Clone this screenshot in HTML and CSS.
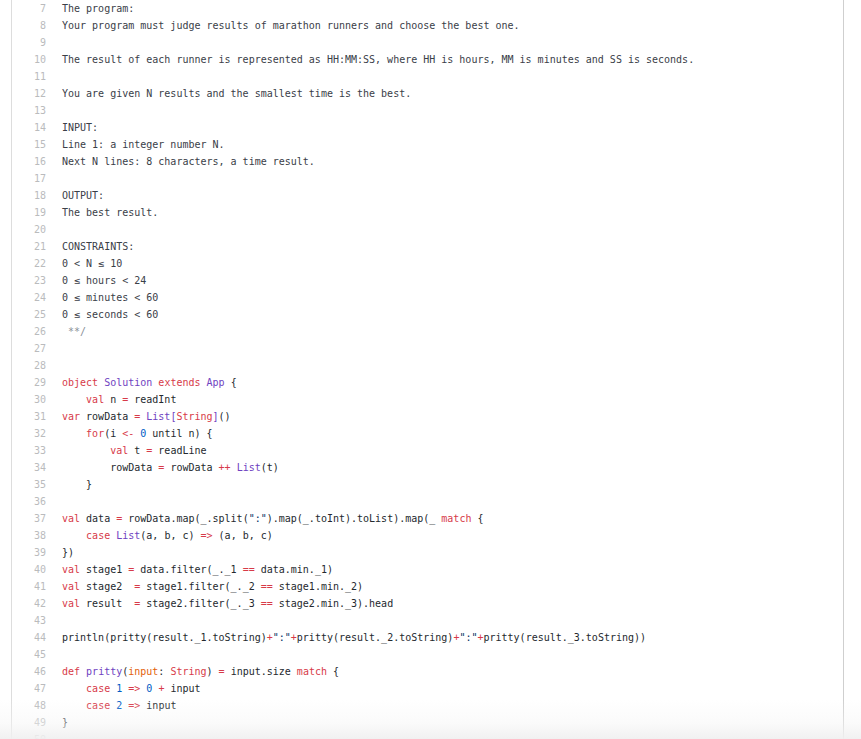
FILE: index.html
```html
<!DOCTYPE html>
<html>
<head>
<meta charset="utf-8">
<link rel="stylesheet" href="styles.css">
</head>
<body>
<div class="blob">
<table class="code">
<tr><td class="num">7</td><td class="line c">The program:</td></tr>
<tr><td class="num">8</td><td class="line c">Your program must judge results of marathon runners and choose the best one.</td></tr>
<tr><td class="num">9</td><td class="line c"></td></tr>
<tr><td class="num">10</td><td class="line c">The result of each runner is represented as HH:MM:SS, where HH is hours, MM is minutes and SS is seconds.</td></tr>
<tr><td class="num">11</td><td class="line c"></td></tr>
<tr><td class="num">12</td><td class="line c">You are given N results and the smallest time is the best.</td></tr>
<tr><td class="num">13</td><td class="line c"></td></tr>
<tr><td class="num">14</td><td class="line c">INPUT:</td></tr>
<tr><td class="num">15</td><td class="line c">Line 1: a integer number N.</td></tr>
<tr><td class="num">16</td><td class="line c">Next N lines: 8 characters, a time result.</td></tr>
<tr><td class="num">17</td><td class="line c"></td></tr>
<tr><td class="num">18</td><td class="line c">OUTPUT:</td></tr>
<tr><td class="num">19</td><td class="line c">The best result.</td></tr>
<tr><td class="num">20</td><td class="line c"></td></tr>
<tr><td class="num">21</td><td class="line c">CONSTRAINTS:</td></tr>
<tr><td class="num">22</td><td class="line c">0 &lt; N ≤ 10</td></tr>
<tr><td class="num">23</td><td class="line c">0 ≤ hours &lt; 24</td></tr>
<tr><td class="num">24</td><td class="line c">0 ≤ minutes &lt; 60</td></tr>
<tr><td class="num">25</td><td class="line c">0 ≤ seconds &lt; 60</td></tr>
<tr><td class="num">26</td><td class="line c"> <span class="end">**/</span></td></tr>
<tr><td class="num">27</td><td class="line"></td></tr>
<tr><td class="num">28</td><td class="line"></td></tr>
<tr><td class="num">29</td><td class="line"><span class="k">object</span> <span class="t">Solution</span> <span class="k">extends</span> <span class="t">App</span> {</td></tr>
<tr><td class="num">30</td><td class="line">    <span class="k">val</span> n <span class="k">=</span> readInt</td></tr>
<tr><td class="num">31</td><td class="line"><span class="k">var</span> rowData <span class="k">=</span> <span class="t">List[</span><span class="k">String</span><span class="t">]</span>()</td></tr>
<tr><td class="num">32</td><td class="line">    <span class="k">for</span>(i <span class="k">&lt;-</span> <span class="n">0</span> until n) {</td></tr>
<tr><td class="num">33</td><td class="line">        <span class="k">val</span> t <span class="k">=</span> readLine</td></tr>
<tr><td class="num">34</td><td class="line">        rowData <span class="k">=</span> rowData <span class="k">++</span> <span class="t">List</span>(t)</td></tr>
<tr><td class="num">35</td><td class="line">    }</td></tr>
<tr><td class="num">36</td><td class="line"></td></tr>
<tr><td class="num">37</td><td class="line"><span class="k">val</span> data <span class="k">=</span> rowData.map(_.split(<span class="s">":"</span>).map(_.toInt).toList).map(_ <span class="k">match</span> {</td></tr>
<tr><td class="num">38</td><td class="line">    <span class="k">case</span> <span class="t">List</span>(a, b, c) <span class="k">=&gt;</span> (a, b, c)</td></tr>
<tr><td class="num">39</td><td class="line">})</td></tr>
<tr><td class="num">40</td><td class="line"><span class="k">val</span> stage1 <span class="k">=</span> data.filter(_._1 <span class="k">==</span> data.min._1)</td></tr>
<tr><td class="num">41</td><td class="line"><span class="k">val</span> stage2  <span class="k">=</span> stage1.filter(_._2 <span class="k">==</span> stage1.min._2)</td></tr>
<tr><td class="num">42</td><td class="line"><span class="k">val</span> result  <span class="k">=</span> stage2.filter(_._3 <span class="k">==</span> stage2.min._3).head</td></tr>
<tr><td class="num">43</td><td class="line"></td></tr>
<tr><td class="num">44</td><td class="line">println(pritty(result._1.toString)<span class="k">+</span><span class="s">":"</span><span class="k">+</span>pritty(result._2.toString)<span class="k">+</span><span class="s">":"</span><span class="k">+</span>pritty(result._3.toString))</td></tr>
<tr><td class="num">45</td><td class="line"></td></tr>
<tr><td class="num">46</td><td class="line"><span class="k">def</span> <span class="t">pritty</span>(<span class="v">input</span>: <span class="k">String</span>) <span class="k">=</span> input.size <span class="k">match</span> {</td></tr>
<tr><td class="num">47</td><td class="line">    <span class="k">case</span> <span class="n">1</span> <span class="k">=&gt;</span> <span class="n">0</span> <span class="k">+</span> input</td></tr>
<tr><td class="num">48</td><td class="line">    <span class="k">case</span> <span class="n">2</span> <span class="k">=&gt;</span> input</td></tr>
<tr><td class="num">49</td><td class="line">}</td></tr>
<tr><td class="num">50</td><td class="line"></td></tr>
</table>
</div>
<div class="fade"></div>
</body>
</html>
```

FILE: styles.css
```css
html, body {
  margin: 0;
  padding: 0;
  background: #fff;
  overflow: hidden;
  height: 739px;
}
.blob {
  margin-left: 11px;
  width: 831px;
  border-left: 1px solid #dddddd;
  border-right: 1px solid #cfcfcf;
  height: 760px;
}
.code {
  border-collapse: collapse;
  border-spacing: 0;
  font-family: "DejaVu Sans Mono", monospace;
  font-size: 10px;
}
.code td {
  padding: 0;
  height: 17px;
  line-height: 17px;
  vertical-align: top;
  white-space: pre;
}
.num {
  width: 34px;
  text-align: right;
  color: #babbbd;
}
.line {
  padding-left: 16px !important;
  color: #24292e;
}
.line.c { color: #3a4048; }
.end { color: #8a9098; }
.k { color: #d73a49; }
.t { color: #6f42c1; }
.n { color: #005cc5; }
.v { color: #e36209; }
.s { color: #032f62; }
.fade {
  position: absolute;
  left: 0;
  right: 0;
  top: 700px;
  height: 39px;
  background: linear-gradient(rgba(255,255,255,0) 0%, rgba(245,245,245,0.45) 60%, rgba(240,240,240,0.95) 100%);
}
```
